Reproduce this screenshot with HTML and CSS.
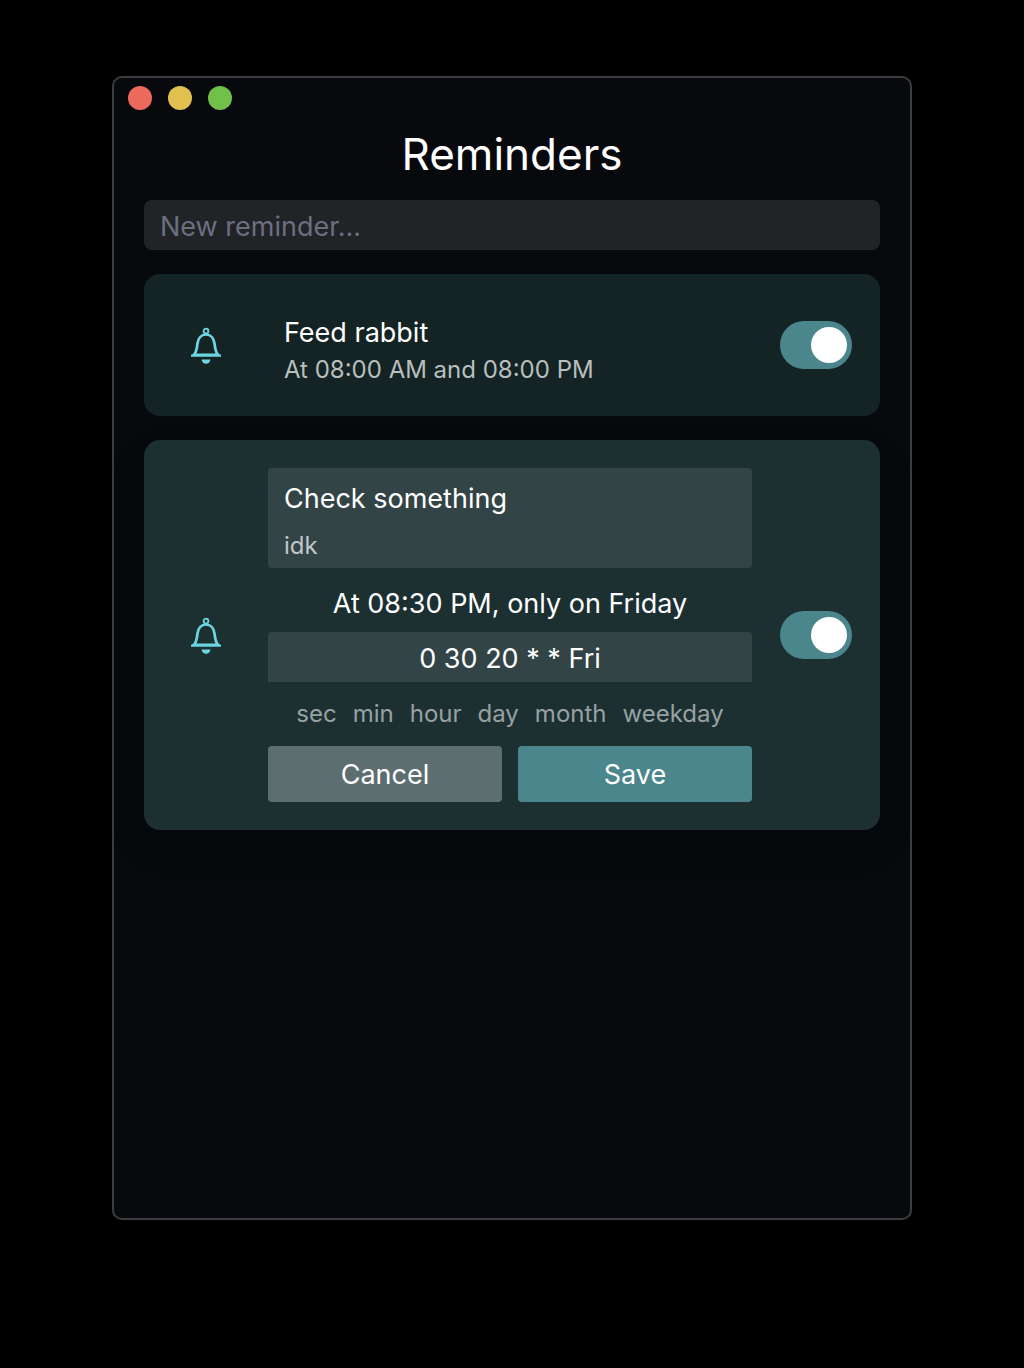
FILE: index.html
```html
<!DOCTYPE html>
<html lang="en">
<head>
<meta charset="utf-8">
<meta name="viewport" content="width=device-width, initial-scale=1">
<title>Reminders</title>
<link rel="stylesheet" href="styles.css">
</head>
<body>
<svg class="sprite" aria-hidden="true">
  <symbol id="bell" viewBox="0 -2 30 38">
    <circle cx="15" cy="3" r="2.4" fill="none" stroke="currentColor" stroke-width="1.8"/>
    <path d="M3 27.200C5.500 24 6 20 6.500 15.500C7.200 10 10.500 6.500 15 6.500C19.500 6.500 22.800 10 23.500 15.500C24 20 24.500 24 27 27.200" fill="none" stroke="currentColor" stroke-width="2.700"/>
    <path d="M0 28.700V26.800L3 25.500H27L30 26.800V28.700Z" fill="currentColor"/>
    <path d="M10.500 31.500H19.500C19 34.300 17.300 35.800 15 35.800C12.700 35.800 11 34.300 10.500 31.500Z" fill="currentColor"/>
  </symbol>
</svg>
<main class="window">
  <div class="titlebar">
    <button class="light light-close" type="button" aria-label="Close"></button>
    <button class="light light-minimize" type="button" aria-label="Minimize"></button>
    <button class="light light-zoom" type="button" aria-label="Zoom"></button>
  </div>
  <h1 class="title">Reminders</h1>
  <input class="new-reminder" type="text" placeholder="New reminder..." aria-label="New reminder">
  <ul class="list">
    <li class="card">
      <svg class="bell" aria-hidden="true"><use href="#bell"/></svg>
      <div class="summary">
        <h2 class="name">Feed rabbit</h2>
        <p class="schedule">At 08:00 AM and 08:00 PM</p>
      </div>
      <input class="toggle" type="checkbox" role="switch" aria-label="Enable Feed rabbit" checked>
    </li>
    <li class="card card-open">
      <svg class="bell" aria-hidden="true"><use href="#bell"/></svg>
      <form class="editor">
        <div class="fields">
          <input class="field field-name" type="text" value="Check something" aria-label="Name">
          <input class="field field-note" type="text" value="idk" aria-label="Note">
        </div>
        <p class="preview">At 08:30 PM, only on Friday</p>
        <input class="cron" type="text" value="0 30 20 * * Fri" aria-label="Cron expression">
        <div class="units">
          <span>sec</span><span>min</span><span>hour</span><span>day</span><span>month</span><span>weekday</span>
        </div>
        <div class="actions">
          <button class="button button-cancel" type="button">Cancel</button>
          <button class="button button-save" type="button">Save</button>
        </div>
      </form>
      <input class="toggle" type="checkbox" role="switch" aria-label="Enable Check something" checked>
    </li>
  </ul>
</main>
</body>
</html>
```
FILE: styles.css
```css
* {
  box-sizing: border-box;
  margin: 0;
}

body {
  display: flex;
  min-height: 100vh;
  padding: 76px 112px 148px;
  background: #000;
  color: #fff;
  font-family: Inter, "Liberation Sans", sans-serif;
  font-size: 27px;
}

input,
button {
  border: 0;
  padding: 0;
  color: inherit;
  font: inherit;
  min-width: 0;
}

.sprite {
  position: absolute;
  width: 0;
  height: 0;
}

.window {
  flex: 1;
  min-width: 0;
  padding: 0 30px 30px;
  border: 2px solid #3b3c3f;
  border-radius: 10px;
  background: #07090d;
}

.titlebar {
  display: flex;
  gap: 16px;
  margin: 0 -16px;
  padding-top: 8px;
}

.light {
  width: 24px;
  height: 24px;
  border-radius: 50%;
}

.light-close { background: #ec695e; }
.light-minimize { background: #e2c04f; }
.light-zoom { background: #71c04a; }

.title {
  margin: 12px 0 14px;
  font-size: 44px;
  font-weight: 400;
  line-height: 64px;
  text-align: center;
}

.new-reminder {
  display: block;
  width: 100%;
  height: 50px;
  padding: 2px 16px 0;
  border-radius: 8px;
  background: #222326;
}

.new-reminder::placeholder {
  color: #6b7080;
  opacity: 1;
}

.list {
  display: grid;
  gap: 24px;
  margin-top: 24px;
  padding: 0;
  list-style: none;
}

.card {
  display: grid;
  grid-template-columns: 124px minmax(0, 1fr) 100px;
  align-items: center;
  padding: 28px 28px 28px 0;
  border-radius: 16px;
  background: #142424;
}

.card-open {
  background: #1c3032;
  box-shadow: 0 16px 32px rgba(0, 0, 0, 0.2);
}

.bell {
  justify-self: center;
  width: 30px;
  height: 38px;
  color: #6cd5e0;
}

.summary {
  padding: 12px 16px 0;
}

.name {
  font-size: 27px;
  font-weight: 400;
  line-height: 38px;
}

.schedule {
  color: #b9bfbf;
  font-size: 24px;
  line-height: 36px;
}

.toggle {
  display: flex;
  align-items: center;
  justify-content: flex-end;
  justify-self: end;
  width: 72px;
  height: 48px;
  padding: 0 5px;
  border-radius: 24px;
  background: #4b868c;
  appearance: none;
}

.toggle::before {
  content: "";
  width: 36px;
  height: 36px;
  border-radius: 50%;
  background: #fff;
}

.toggle:not(:checked) {
  justify-content: flex-start;
  background: #5d6e71;
}

.fields {
  display: grid;
  gap: 8px;
  padding: 10px 16px 4px;
  border-radius: 4px;
  background: #324446;
}

.field {
  width: 100%;
  background: transparent;
}

.field-name {
  height: 40px;
}

.field-note {
  height: 38px;
  color: #c1c7c8;
  font-size: 24px;
}

.preview {
  margin: 16px 0 8px;
  line-height: 40px;
  text-align: center;
}

.cron {
  display: block;
  width: 100%;
  height: 50px;
  padding-top: 2px;
  border-radius: 4px 4px 0 0;
  background: #324446;
  text-align: center;
}

.units {
  display: flex;
  justify-content: center;
  gap: 16px;
  margin: 12px 0;
  color: #97a1a2;
  font-size: 24px;
  line-height: 40px;
}

.actions {
  display: grid;
  grid-template-columns: 1fr 1fr;
  gap: 16px;
}

.button {
  height: 56px;
  border-radius: 4px;
}

.button-cancel { background: #5d6e71; }
.button-save { background: #4b868c; }
```
